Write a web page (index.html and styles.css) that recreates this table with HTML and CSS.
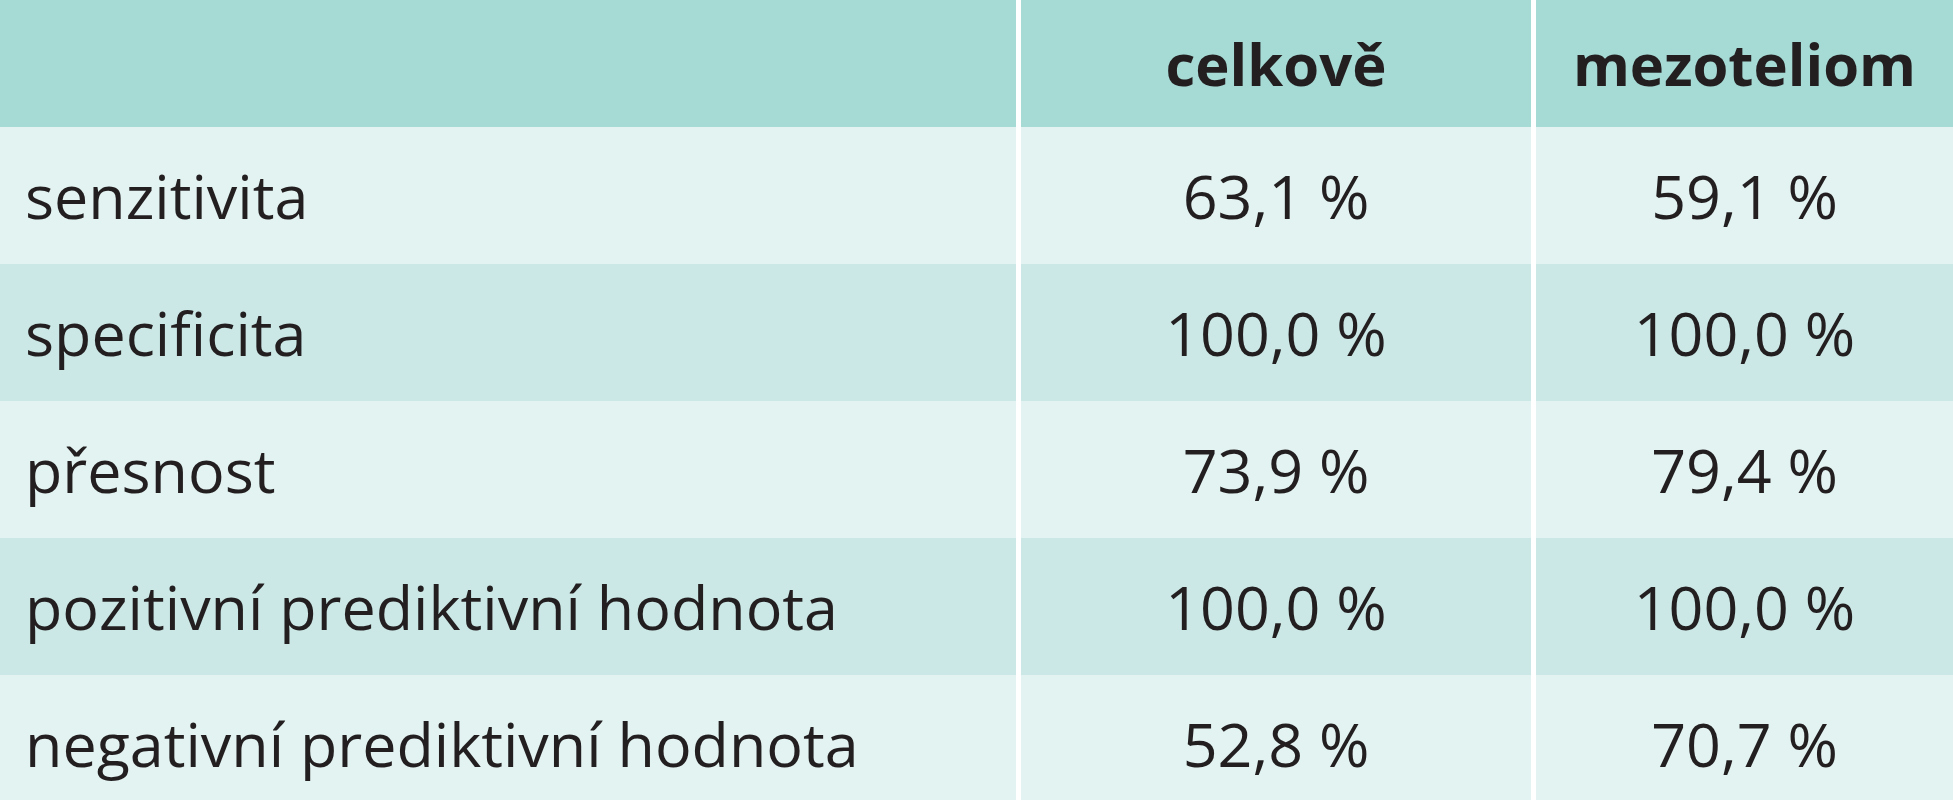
FILE: index.html
```html
<!DOCTYPE html>
<html lang="cs">
<head>
<meta charset="utf-8">
<title>Tabulka</title>
<link rel="stylesheet" href="styles.css">
</head>
<body>
<div class="table">
  <div class="row head">
    <div class="cell label"></div>
    <div class="cell num">celkově</div>
    <div class="cell num">mezoteliom</div>
  </div>
  <div class="row light">
    <div class="cell label">senzitivita</div>
    <div class="cell num">63,1 %</div>
    <div class="cell num">59,1 %</div>
  </div>
  <div class="row dark">
    <div class="cell label">specificita</div>
    <div class="cell num">100,0 %</div>
    <div class="cell num">100,0 %</div>
  </div>
  <div class="row light">
    <div class="cell label">přesnost</div>
    <div class="cell num">73,9 %</div>
    <div class="cell num">79,4 %</div>
  </div>
  <div class="row dark">
    <div class="cell label">pozitivní prediktivní hodnota</div>
    <div class="cell num">100,0 %</div>
    <div class="cell num">100,0 %</div>
  </div>
  <div class="row light">
    <div class="cell label">negativní prediktivní hodnota</div>
    <div class="cell num">52,8 %</div>
    <div class="cell num">70,7 %</div>
  </div>
</div>
</body>
</html>
```
FILE: styles.css
```css
html, body {
  margin: 0;
  padding: 0;
  background: #ffffff;
  overflow: hidden;
}
body {
  width: 1953px;
  height: 800px;
  font-family: "Open Sans", "Noto Sans", sans-serif;
  font-size: 61px;
  color: #231f20;
}
.table {
  display: flex;
  flex-direction: column;
}
.row {
  display: grid;
  grid-template-columns: 1016px 510px 1fr;
  column-gap: 5px;
  height: 137px;
}
.row.head {
  height: 127px;
  font-weight: 700;
  font-size: 58px;
}
.cell {
  display: flex;
  align-items: center;
}
.label {
  padding-left: 25px;
}
.num {
  justify-content: center;
}
.head .cell { background: #a6dad5; }
.light .cell { background: #e3f3f2; }
.dark .cell { background: #cbe8e6; }
```
